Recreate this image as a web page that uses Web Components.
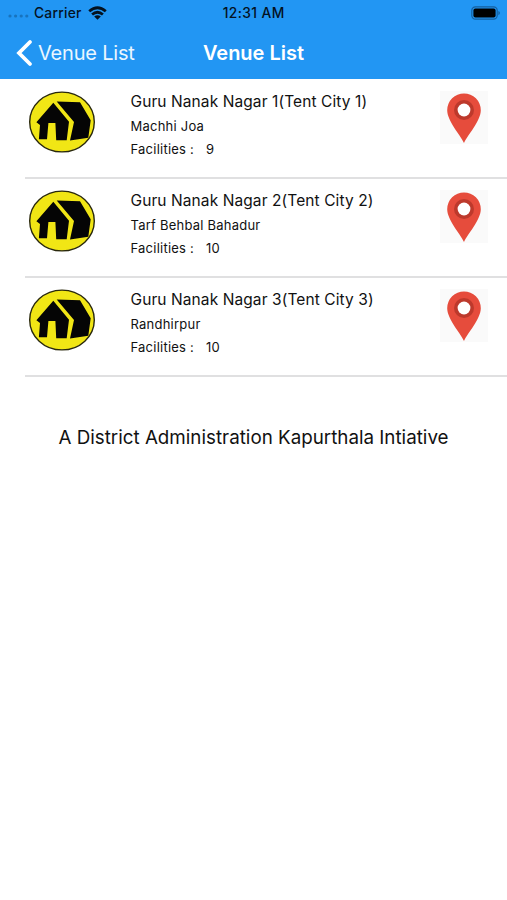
<!DOCTYPE html>
<html lang="en"><head><meta charset="utf-8"><title>Venue List</title>
<style>
html,body{margin:0;background:#fff}
body{font-family:Inter,"Liberation Sans",sans-serif;color:#111}
</style></head><body>
<venue-app></venue-app>
<script>
const define = (name, html) => customElements.define(name, class extends HTMLElement {
  constructor() {
    super();
    const t = document.createElement('template');
    t.innerHTML = html;
    this.attachShadow({mode: 'open'}).append(t.content.cloneNode(true));
  }
});

define('status-bar', `<style>
:host{display:grid;grid-template-columns:1fr auto 1fr;align-items:center;height:26px;color:#04121f;font-size:13.8px;font-weight:500;line-height:16px}
.left{display:flex;align-items:center;padding-left:8px}
.dots{margin:6px 5px 0 0}
.carrier{letter-spacing:.25px}
.wifi{margin-left:6px}
.time{letter-spacing:.4px;margin-right:-.4px}
.battery{justify-self:end;margin-right:6px}
svg{display:block}
</style>
<div class="left">
<svg class="dots" width="21" height="4" fill="#1873bd"><circle cx="2" cy="2" r="1.6"/><circle cx="7.6" cy="2" r="1.6"/><circle cx="13.2" cy="2" r="1.6"/><circle cx="18.8" cy="2" r="1.6"/></svg>
<span class="carrier">Carrier</span>
<svg class="wifi" width="19" height="14" viewBox="0 0 19 14" fill="none" stroke="#04121f" stroke-width="2.8"><path d="M1.2 5.2Q9.5-1.8 17.8 5.2M4.1 8.5Q9.5 4 14.9 8.5"/><path d="M6.2 10.5Q9.5 8 12.8 10.5L9.5 13.8Z" fill="#04121f" stroke="none"/></svg>
</div>
<span class="time">12:31 AM</span>
<svg class="battery" width="30" height="14" viewBox="0 0 30 14"><rect x=".8" y=".8" width="25.4" height="12.4" rx="3.6" fill="none" stroke="#155f9e" stroke-width="1.2"/><rect x="2.4" y="2.4" width="22.2" height="9.2" rx="2" fill="#000"/><path d="M27.4 5v4.2q1.5-.6 1.5-2.1T27.4 5" fill="#155f9e"/></svg>`);

define('nav-bar', `<style>
:host{display:grid;grid-template-columns:1fr auto 1fr;align-items:center;height:53px;color:#fff;line-height:26px}
.back{display:flex;align-items:center;font-size:20px;letter-spacing:-.2px;color:#eaf6ff;padding-left:16px}
.back svg{margin-right:5px}
h1{font-size:20px;font-weight:600;margin:0}
</style>
<div class="back"><svg width="17" height="28" viewBox="0 0 17 28" fill="none" stroke="#fff" stroke-width="3.8" stroke-linecap="round"><path d="M14 3L3 14L14 25"/></svg><span><slot name="back"></slot></span></div>
<h1><slot></slot></h1>`);

define('house-badge', `<style>:host{display:block;width:68px;height:62px}svg{display:block}</style>
<svg width="68" height="62" viewBox="0 0 68 62"><ellipse cx="34" cy="31" rx="32.3" ry="29.9" fill="#f1e615" stroke="#29280c" stroke-width="1.4"/><path d="M25.3 11.8L41 30.8L38.7 49.3H28.2L27.4 32H20.4L19 48.3H10.9L12 34L8.4 31.2Z M28.7 10.6L52 11.3L62.7 29.3L60.3 46.8L42 49.6L46 31Z" fill="#050505"/></svg>`);

define('map-pin', `<style>:host{display:block;width:48px;height:53px;background:#fafafa}svg{display:block}</style>
<svg width="48" height="53" viewBox="0 0 48 53"><path d="M24 52C20.5 44 7.2 30 7.2 19.2A16.8 16.8 0 0 1 40.8 19.2C40.8 30 27.5 44 24 52Z" fill="#e64c3c"/><circle cx="24" cy="19" r="10" fill="#bd392c"/><circle cx="24" cy="19" r="6.4" fill="#fff"/></svg>`);

define('venue-row', `<style>
:host{display:block;height:99px;box-sizing:border-box;padding-left:25px}
.row{display:flex;height:100px;box-sizing:border-box;border-bottom:2px solid #e0e0e1}
house-badge{margin:12px 0 0 3px}
.text{flex:1;padding:13px 0 0 34.5px}
.name{font-size:15.5px;line-height:20px;letter-spacing:.09px}
.place,.fac{font-size:13px;line-height:24px;letter-spacing:.23px}
.place{padding-top:2px}
.fac{display:flex;gap:12px;margin-top:-1px}
map-pin{margin:12px 19px 0 0}
</style><div class="row"><house-badge></house-badge><div class="text">
<div class="name"><slot name="name"></slot></div><div class="place"><slot name="place"></slot></div>
<div class="fac"><span>Facilities :</span><span><slot name="count"></slot></span></div></div><map-pin></map-pin></div>`);

define('venue-app', `<style>
:host{display:block;height:900px;overflow:hidden;background:#fff}
header{background:#2296f3}
.foot{margin:0;padding-top:50px;text-align:center;font-size:18.8px;line-height:24px}
</style>
<header><status-bar></status-bar><nav-bar>Venue List<span slot="back">Venue List</span></nav-bar></header>
<main>
<venue-row><span slot="name">Guru Nanak Nagar 1(Tent City 1)</span><span slot="place">Machhi Joa</span><span slot="count">9</span></venue-row>
<venue-row><span slot="name">Guru Nanak Nagar 2(Tent City 2)</span><span slot="place">Tarf Behbal Bahadur</span><span slot="count">10</span></venue-row>
<venue-row><span slot="name">Guru Nanak Nagar 3(Tent City 3)</span><span slot="place">Randhirpur</span><span slot="count">10</span></venue-row>
<p class="foot">A District Administration Kapurthala Intiative</p>
</main>`);
</script></body></html>
